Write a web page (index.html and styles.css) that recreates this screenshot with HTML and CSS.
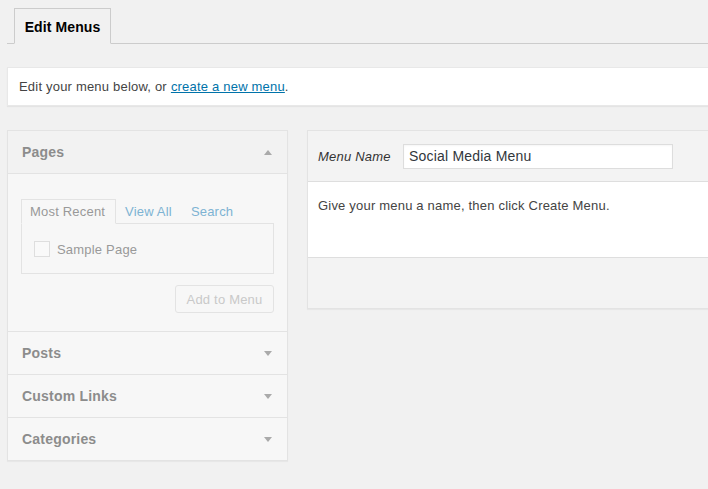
FILE: index.html
```html
<!DOCTYPE html>
<html>
<head>
<meta charset="utf-8">
<link rel="stylesheet" href="styles.css">
</head>
<body>
<div class="wrap">
  <nav class="nav-tabs">
    <span class="nav-tab">Edit Menus</span>
  </nav>

  <div class="notice">
    Edit your menu below, or <a href="#" class="link">create a new menu</a>.
  </div>

  <div class="columns">
    <div class="side">
      <div class="acc-section open">
        <div class="acc-title">
          <span>Pages</span>
          <span class="arrow up"></span>
        </div>
        <div class="acc-body">
          <div class="tabs">
            <span class="tab active">Most Recent</span>
            <span class="tab link-tab">View All</span>
            <span class="tab link-tab">Search</span>
          </div>
          <div class="tab-panel">
            <label class="check-row"><span class="checkbox"></span>Sample Page</label>
          </div>
          <div class="btn-row">
            <span class="button">Add to Menu</span>
          </div>
        </div>
      </div>
      <div class="acc-section">
        <div class="acc-title"><span>Posts</span><span class="arrow down"></span></div>
      </div>
      <div class="acc-section">
        <div class="acc-title"><span>Custom Links</span><span class="arrow down"></span></div>
      </div>
      <div class="acc-section">
        <div class="acc-title"><span>Categories</span><span class="arrow down"></span></div>
      </div>
    </div>

    <div class="menu-edit">
      <div class="menu-header">
        <label class="menu-name-label">Menu Name</label>
        <div class="menu-name-input">Social Media Menu</div>
      </div>
      <div class="menu-body">
        Give your menu a name, then click Create Menu.
      </div>
      <div class="menu-footer"></div>
    </div>
  </div>
</div>
</body>
</html>
```

FILE: styles.css
```css
html, body {
  margin: 0;
  padding: 0;
  overflow: hidden;
}
body {
  background: #f1f1f1;
  font-family: "Liberation Sans", Arial, sans-serif;
  font-size: 13px;
  letter-spacing: 0.2px;
  color: #444;
  width: 708px;
  height: 489px;
}
.wrap {
  padding: 8px 0 0 7px;
  margin-right: -30px;
}
.nav-tabs {
  display: flex;
  border-bottom: 1px solid #ccc;
  padding-left: 7px;
  height: 35px;
}
.nav-tab {
  display: flex;
  align-items: center;
  justify-content: center;
  box-sizing: border-box;
  height: 36px;
  width: 97px;
  padding-top: 1px;
  border: 1px solid #ccc;
  border-bottom-color: #f1f1f1;
  background: #f1f1f1;
  font-size: 14px;
  font-weight: bold;
  letter-spacing: 0.1px;
  white-space: nowrap;
  color: #000;
}
.notice {
  margin-top: 23px;
  background: #fff;
  height: 39px;
  display: flex;
  align-items: center;
  padding-left: 11px;
  box-shadow: 0 1px 1px rgba(0,0,0,0.05);
  border: 1px solid #e8e8e8;
  border-right: none;
  box-sizing: border-box;
  color: #444;
}
.notice .link {
  color: #0073aa;
  text-decoration: underline;
  margin-left: 4px;
}
.columns {
  display: flex;
  align-items: flex-start;
  margin-top: 24px;
  gap: 19px;
}
.side {
  width: 281px;
  box-sizing: border-box;
  border: 1px solid #e3e3e3;
  background: #f7f7f7;
  box-shadow: 0 1px 1px rgba(0,0,0,0.04);
}
.acc-section + .acc-section {
  border-top: 1px solid #e3e3e3;
}
.acc-title {
  height: 42px;
  display: flex;
  align-items: center;
  justify-content: space-between;
  padding: 0 15px 0 14px;
  font-size: 14px;
  font-weight: bold;
  letter-spacing: 0.2px;
  color: #8c8c8c;
  background: #f7f7f7;
}
.open .acc-title {
  background: #f2f2f2;
  border-bottom: 1px solid #e3e3e3;
}
.arrow {
  width: 0;
  height: 0;
  border-left: 4px solid transparent;
  border-right: 4px solid transparent;
}
.arrow.up { border-bottom: 5px solid #aaa; }
.arrow.down { border-top: 5px solid #aaa; }
.acc-body {
  padding: 25px 13px 18px 13px;
}
.tabs {
  display: flex;
  height: 24px;
}
.tab {
  display: flex;
  align-items: center;
  font-size: 13px;
  padding: 0 9px;
}
.tab.active {
  box-sizing: border-box;
  height: 25px;
  width: 95px;
  padding: 0 0 0 8px;
  border: 1px solid #e3e3e3;
  border-bottom-color: #f7f7f7;
  color: #999;
  background: #f7f7f7;
  position: relative;
  z-index: 1;
  white-space: nowrap;
}
.tab.link-tab {
  color: #7db3d3;
  padding: 0 10px 0 9px;
}
.tab-panel {
  box-sizing: border-box;
  height: 51px;
  border: 1px solid #e3e3e3;
  padding: 17px 12px 0 12px;
}
.check-row {
  display: flex;
  align-items: center;
  color: #999;
  font-size: 13px;
}
.checkbox {
  box-sizing: border-box;
  width: 16px;
  height: 16px;
  border: 1px solid #dedede;
  background: #f9f9f9;
  margin-right: 7px;
}
.btn-row {
  display: flex;
  justify-content: flex-end;
  margin-top: 11px;
}
.button {
  box-sizing: border-box;
  display: flex;
  align-items: center;
  justify-content: center;
  width: 99px;
  height: 28px;
  border: 1px solid #e3e3e3;
  border-radius: 3px;
  background: #f7f7f7;
  color: #c9c9c9;
  font-size: 13px;
}
.menu-edit {
  flex: 1;
  border: 1px solid #e3e3e3;
  border-right: none;
  background: #fff;
  box-shadow: 0 1px 1px rgba(0,0,0,0.04);
}
.menu-header {
  height: 50px;
  background: #f3f3f3;
  border-bottom: 1px solid #dedede;
  display: flex;
  align-items: center;
  padding-left: 10px;
}
.menu-name-label {
  font-style: italic;
  color: #333;
  font-size: 13px;
  width: 85px;
}
.menu-name-input {
  box-sizing: border-box;
  width: 270px;
  height: 25px;
  border: 1px solid #ddd;
  background: #fff;
  display: flex;
  align-items: center;
  padding-left: 5px;
  font-size: 14px;
  color: #32373c;
  box-shadow: inset 0 1px 2px rgba(0,0,0,0.04);
}
.menu-body {
  height: 76px;
  box-sizing: border-box;
  padding: 16px 10px 0 10px;
  border-bottom: 1px solid #dedede;
  color: #444;
}
.menu-footer {
  height: 50px;
  background: #f3f3f3;
}
```
